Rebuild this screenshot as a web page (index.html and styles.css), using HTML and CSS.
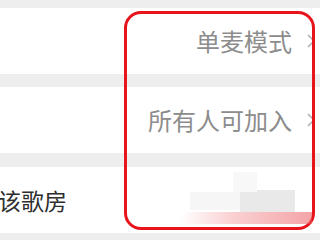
FILE: index.html
```html
<!DOCTYPE html>
<html lang="zh">
<head>
<meta charset="utf-8">
<link rel="stylesheet" href="styles.css">
</head>
<body>
<div class="page">
  <div class="list">
    <div class="row">
      <span class="value">单麦模式</span>
      <svg class="chev" width="10" height="16" viewBox="0 0 10 16"><path d="M2 2 L8 8 L2 14" fill="none" stroke="#b0b0b0" stroke-width="1.6"/></svg>
    </div>
    <div class="row">
      <span class="value">所有人可加入</span>
      <svg class="chev" width="10" height="16" viewBox="0 0 10 16"><path d="M2 2 L8 8 L2 14" fill="none" stroke="#b0b0b0" stroke-width="1.6"/></svg>
    </div>
    <div class="row row-label">
      <span class="label">谁可进入该歌房</span>
    </div>
  </div>
  <div class="blur blur-a"></div>
  <div class="blur blur-b"></div>
  <div class="blur blur-c"></div>
  <div class="highlight"></div>
  <div class="smear"></div>
</div>
</body>
</html>
```

FILE: styles.css
```css
html, body {
  margin: 0;
  padding: 0;
  background: #eeeeee;
}
.page {
  position: relative;
  width: 320px;
  height: 240px;
  overflow: hidden;
  font-family: "Noto Sans CJK SC", "Noto Sans", sans-serif;
}
.list {
  display: flex;
  flex-direction: column;
  gap: 13px;
  padding-top: 8px;
}
.row {
  height: 66px;
  background: #ffffff;
  display: flex;
  align-items: center;
  justify-content: flex-end;
  padding-right: 4px;
}
.row-label {
  justify-content: flex-start;
  padding-right: 0;
}
.row + .row + .row {
  margin-top: 1px;
}
.value {
  font-size: 24px;
  line-height: 1;
  color: #8c8c8c;
}
.chev {
  margin-left: 14px;
  display: block;
}
.label {
  font-size: 23px;
  line-height: 1;
  color: #2e2e2e;
  white-space: nowrap;
  margin-left: -94px;
}
.highlight {
  position: absolute;
  left: 124px;
  top: 11px;
  width: 185px;
  height: 213px;
  border: 3.5px solid #e8141c;
  border-radius: 17px;
}
.blur {
  position: absolute;
}
.blur-a {
  left: 190px;
  top: 192px;
  width: 50px;
  height: 18px;
  background: #f6f6f6;
}
.blur-b {
  left: 240px;
  top: 190px;
  width: 55px;
  height: 22px;
  background: #e9e9e9;
}
.blur-c {
  left: 233px;
  top: 172px;
  width: 24px;
  height: 20px;
  background: #f8f8f8;
}
.smear {
  position: absolute;
  left: 180px;
  top: 212px;
  width: 132px;
  height: 12px;
  background: linear-gradient(to right, rgba(240,120,125,0) 0%, rgba(240,120,125,0.35) 40%, rgba(235,90,95,0.55) 100%);
}
```
